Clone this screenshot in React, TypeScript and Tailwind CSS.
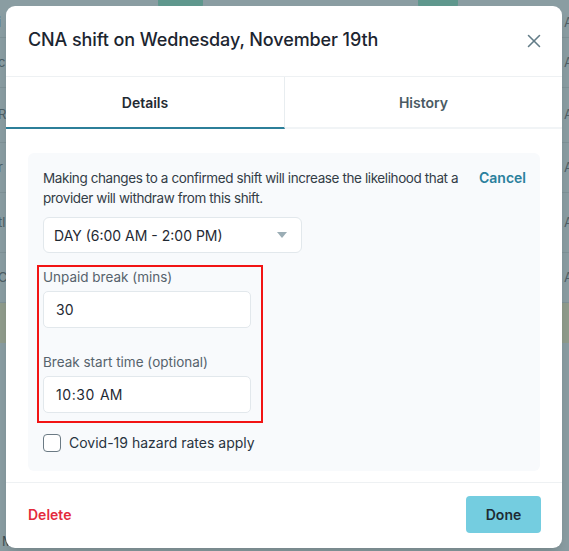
import { X } from 'lucide-react';

const bgRows = [
  { y: 'h-[30px]', t: 'i' },
  { y: 'h-[50px]', t: 'c' },
  { y: 'h-[55px]', t: 'R' },
  { y: 'h-[50px]', t: 'r' },
  { y: 'h-[60px]', t: 'tl' },
  { y: 'h-[50px]', t: 'C' },
];

export default function App() {
  return (
    <div
      className="relative h-[551px] w-[569px] overflow-hidden bg-[#8a9da2]"
      style={{ fontFamily: 'Inter, "Noto Sans", sans-serif' }}
    >
      {/* page behind the overlay */}
      <div className="flex h-full flex-col text-[13px] text-[#4d5f66]">
        <div className="flex h-[8px]">
          <div className="ml-[158px] h-full w-[45px] rounded-b bg-[#5f978d]" />
          <div className="ml-[215px] h-full w-[40px] rounded-b bg-[#5f978d]" />
        </div>
        {bgRows.map((r, i) => (
          <div key={i} className={`${r.y} flex items-center justify-between border-b border-[#7f9297]`}>
            <span className="-ml-[2px]">{r.t}</span>
            <span className="-mr-[4px]">A</span>
          </div>
        ))}
        <div className="h-[40px] bg-[#909c8c]" />
        <div className="flex-1" />
        <div className="pl-[2px] text-[#3f4f55]">Musa, CNA</div>
      </div>

      {/* modal */}
      <div className="absolute left-[6px] top-[6px] flex h-[542px] w-[556px] flex-col rounded-[9px] bg-white shadow-lg">
        <div className="flex h-[71px] items-center justify-between border-b border-[#eef1f3] pl-[22px] pr-[17px]">
          <h2 className="-mt-[3px] text-[18px] font-medium tracking-[-0.1px] text-[#1c2530]">
            CNA shift on Wednesday, November 19th
          </h2>
          <X className="h-[22px] w-[22px] text-[#627c87]" strokeWidth={1.7} />
        </div>

        <div className="flex h-[52px]">
          <div className="flex w-[279px] items-center justify-center border-b-2 border-r border-[#2c7f99] border-r-[#e8edf0] text-[14px] font-semibold text-[#1f2a33]">
            Details
          </div>
          <div className="flex flex-1 items-center justify-center border-b-2 border-[#f1f4f6] text-[14px] font-semibold text-[#4a5a63]">
            History
          </div>
        </div>

        <div className="px-[22px] pb-[11px] pt-[24px]">
          <div className="rounded-[6px] bg-[#f8fafc] pb-[18px] pl-[15px] pr-[14px] pt-[15px]">
            <div className="flex items-start justify-between">
              <p className="w-[425px] text-[13.5px] leading-[20px] tracking-[-0.4px] text-[#333d47]">
                Making changes to a confirmed shift will increase the likelihood that a provider will
                withdraw from this shift.
              </p>
              <button className="text-[14px] font-semibold leading-[20px] text-[#2a809c]">Cancel</button>
            </div>

            <div className="mt-[9px] flex h-[36px] w-[259px] items-center justify-between rounded-[6px] border border-[#e2e8ec] bg-white pl-[10px] pr-[14px] text-[14px] text-[#1f2933]">
              <span>DAY (6:00 AM - 2:00 PM)</span>
              <svg width="10" height="6" viewBox="0 0 10 6">
                <path d="M0 0h10L5 6z" fill="#9badb5" />
              </svg>
            </div>

            <div className="-ml-[6px] mt-[12px] w-[226px] border-2 border-[#f21414] pb-[8px] pl-[4px] pr-[10px]">
              <label className="block text-[13.5px] leading-[20px] text-[#56636c]">Unpaid break (mins)</label>
              <div className="mt-[4px] flex h-[37px] items-center rounded-[5px] border border-[#e2e8ec] bg-white pl-[12px] text-[14px] text-[#1f2933]">
                30
              </div>
              <label className="mt-[24px] block text-[13.5px] leading-[20px] text-[#56636c]">
                Break start time (optional)
              </label>
              <div className="mt-[4px] flex h-[37px] items-center rounded-[5px] border border-[#e2e8ec] bg-white pl-[12px] text-[14px] text-[#1f2933]">
                <span className="tracking-[0.6px]">10:30</span>
                <span className="ml-[5px]">AM</span>
              </div>
            </div>

            <label className="mt-[9px] flex items-center gap-[8px]">
              <span className="h-[18px] w-[18px] rounded-[4px] border border-[#6b7a84] bg-white" />
              <span className="text-[14px] text-[#283340]">Covid-19 hazard rates apply</span>
            </label>
          </div>
        </div>

        <div className="flex flex-1 items-center justify-between border-t border-[#eef1f3] pb-[3px] pl-[22px] pr-[21px]">
          <button className="text-[14px] font-semibold text-[#e42a3c]">Delete</button>
          <button className="h-[37px] w-[75px] rounded-[4px] bg-[#74cde0] text-[14px] font-semibold text-[#1e2a33]">
            Done
          </button>
        </div>
      </div>
    </div>
  );
}
